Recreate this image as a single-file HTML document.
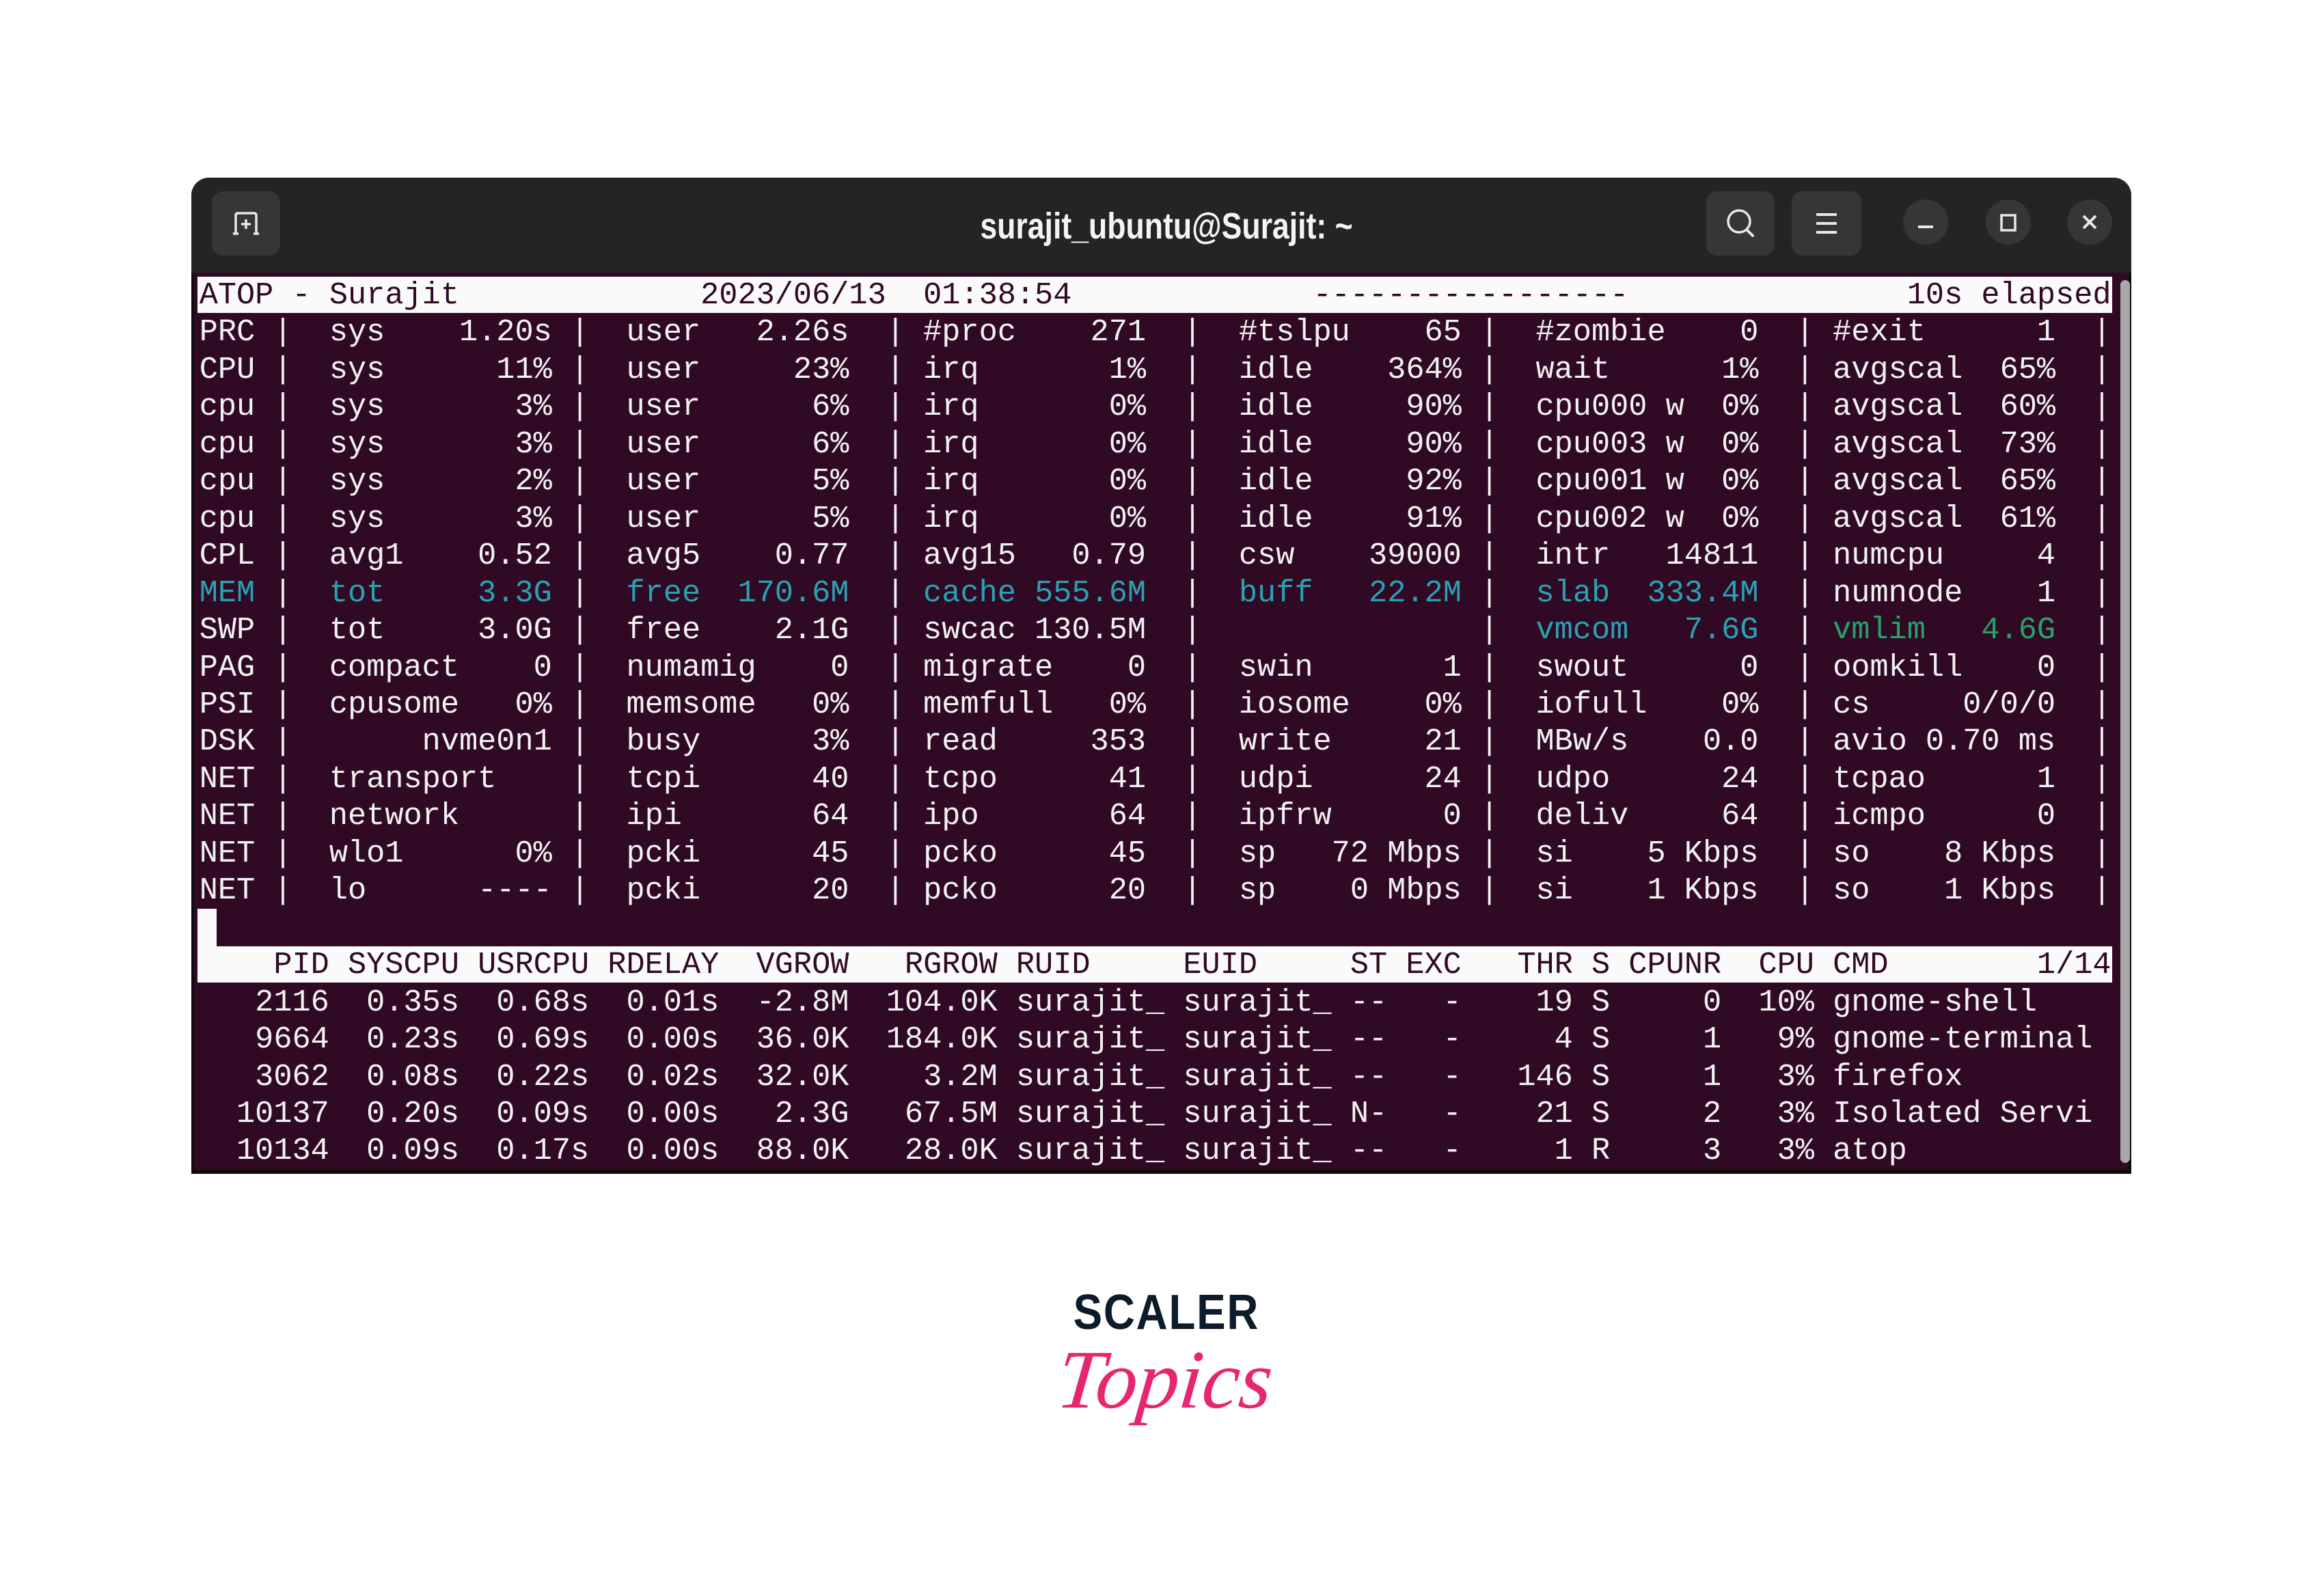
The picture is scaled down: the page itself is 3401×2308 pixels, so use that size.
<!DOCTYPE html>
<html><head><meta charset="utf-8">
<style>
html,body{margin:0;padding:0;background:#fff;}
body{width:3401px;height:2308px;position:relative;overflow:hidden;}
#win{position:absolute;left:280px;top:260px;width:2839px;height:1458px;background:#0c0c0c;border-radius:26px 26px 0 0;overflow:hidden;}
#tb{position:absolute;left:0;top:0;width:2839px;height:139px;background:#242424;}
#term{position:absolute;left:4px;top:139px;width:2831px;height:1313px;background:#300a24;}
.btn{position:absolute;background:#363636;border-radius:16px;}
.circ{position:absolute;background:#363636;border-radius:50%;width:66px;height:66px;top:292px;}
#title{position:absolute;top:300px;left:1707px;transform:translateX(-50%) scaleX(.826);font:bold 54px "Liberation Sans",sans-serif;color:#f4f4f4;white-space:nowrap;}
pre{position:absolute;left:291.7px;top:405px;margin:0;font-family:"Liberation Mono",monospace;font-size:45.28px;line-height:54.45px;color:#f2f2f2;white-space:pre;}
.c{color:#2aa1b3}.g{color:#26a269}
.bar{position:absolute;background:#fafafa;}
.hd{color:#300a24}
#sb{position:absolute;left:3103px;top:410px;width:14px;height:1292px;background:#a8a8a8;border-radius:8px;}
</style></head><body>
<div id="win">
 <div id="tb"></div>
 <div id="term"></div>
</div>
<div class="btn" style="left:310px;top:280px;width:100px;height:94px;"></div>
<svg style="position:absolute;left:310px;top:280px" width="100" height="94" viewBox="0 0 100 94"><path d="M35 62 L35 35 Q35 32 38 32 L62 32 Q65 32 65 35 L65 62 M31 62 L39 62 M61 62 L69 62 M50 41 L50 55 M43 48 L57 48" fill="none" stroke="#e8e8e8" stroke-width="3.5"/></svg>
<div class="btn" style="left:2497px;top:280px;width:100px;height:94px;"></div>
<svg style="position:absolute;left:2497px;top:280px" width="100" height="94" viewBox="0 0 100 94"><circle cx="48" cy="44" r="16" fill="none" stroke="#e8e8e8" stroke-width="3.5"/><path d="M59 56 L68 65" stroke="#e8e8e8" stroke-width="4" stroke-linecap="round"/></svg>
<div class="btn" style="left:2622px;top:280px;width:102px;height:94px;"></div>
<svg style="position:absolute;left:2622px;top:280px" width="102" height="94" viewBox="0 0 102 94"><path d="M36 34 H66 M36 47 H66 M36 60 H66" stroke="#e8e8e8" stroke-width="4"/></svg>
<div class="circ" style="left:2785px;"></div>
<svg style="position:absolute;left:2785px;top:292px" width="66" height="66"><path d="M22 40 H44" stroke="#e8e8e8" stroke-width="4"/></svg>
<div class="circ" style="left:2906px;"></div>
<svg style="position:absolute;left:2906px;top:292px" width="66" height="66"><rect x="23" y="23" width="20" height="22" fill="none" stroke="#e8e8e8" stroke-width="3.5"/></svg>
<div class="circ" style="left:3025px;"></div>
<svg style="position:absolute;left:3025px;top:292px" width="66" height="66"><path d="M24 24 L42 42 M42 24 L24 42" stroke="#e8e8e8" stroke-width="4"/></svg>
<div id="title">surajit_ubuntu@Surajit: ~</div>

<div class="bar" style="left:289px;top:405px;width:2802px;height:53px;"></div>
<div class="bar" style="left:289px;top:1330px;width:28px;height:60px;"></div>
<div class="bar" style="left:289px;top:1385px;width:2802px;height:53px;"></div>
<div id="sb"></div>

<pre><span class="hd">ATOP - Surajit             2023/06/13  01:38:54             -----------------               10s elapsed</span>
PRC |  sys    1.20s |  user   2.26s  | #proc    271  |  #tslpu    65 |  #zombie    0  | #exit      1  |
CPU |  sys      11% |  user     23%  | irq       1%  |  idle    364% |  wait      1%  | avgscal  65%  |
cpu |  sys       3% |  user      6%  | irq       0%  |  idle     90% |  cpu000 w  0%  | avgscal  60%  |
cpu |  sys       3% |  user      6%  | irq       0%  |  idle     90% |  cpu003 w  0%  | avgscal  73%  |
cpu |  sys       2% |  user      5%  | irq       0%  |  idle     92% |  cpu001 w  0%  | avgscal  65%  |
cpu |  sys       3% |  user      5%  | irq       0%  |  idle     91% |  cpu002 w  0%  | avgscal  61%  |
CPL |  avg1    0.52 |  avg5    0.77  | avg15   0.79  |  csw    39000 |  intr   14811  | numcpu     4  |
<span class="c">MEM</span> |  <span class="c">tot     3.3G</span> |  <span class="c">free  170.6M</span>  | <span class="c">cache 555.6M</span>  |  <span class="c">buff   22.2M</span> |  <span class="c">slab  333.4M</span>  | numnode    1  |
SWP |  tot     3.0G |  free    2.1G  | swcac 130.5M  |               |  <span class="c">vmcom   7.6G</span>  | <span class="g">vmlim   4.6G</span>  |
PAG |  compact    0 |  numamig    0  | migrate    0  |  swin       1 |  swout      0  | oomkill    0  |
PSI |  cpusome   0% |  memsome   0%  | memfull   0%  |  iosome    0% |  iofull    0%  | cs     0/0/0  |
DSK |       nvme0n1 |  busy      3%  | read     353  |  write     21 |  MBw/s    0.0  | avio 0.70 ms  |
NET |  transport    |  tcpi      40  | tcpo      41  |  udpi      24 |  udpo      24  | tcpao      1  |
NET |  network      |  ipi       64  | ipo       64  |  ipfrw      0 |  deliv     64  | icmpo      0  |
NET |  wlo1      0% |  pcki      45  | pcko      45  |  sp   72 Mbps |  si    5 Kbps  | so    8 Kbps  |
NET |  lo      ---- |  pcki      20  | pcko      20  |  sp    0 Mbps |  si    1 Kbps  | so    1 Kbps  |

<span class="hd">    PID SYSCPU USRCPU RDELAY  VGROW   RGROW RUID     EUID     ST EXC   THR S CPUNR  CPU CMD        1/14</span>
   2116  0.35s  0.68s  0.01s  -2.8M  104.0K surajit_ surajit_ --   -    19 S     0  10% gnome-shell
   9664  0.23s  0.69s  0.00s  36.0K  184.0K surajit_ surajit_ --   -     4 S     1   9% gnome-terminal
   3062  0.08s  0.22s  0.02s  32.0K    3.2M surajit_ surajit_ --   -   146 S     1   3% firefox
  10137  0.20s  0.09s  0.00s   2.3G   67.5M surajit_ surajit_ N-   -    21 S     2   3% Isolated Servi
  10134  0.09s  0.17s  0.00s  88.0K   28.0K surajit_ surajit_ --   -     1 R     3   3% atop</pre>

<div style="position:absolute;left:1553px;top:1880px;width:306px;text-align:center;font:bold 72px 'Liberation Sans',sans-serif;letter-spacing:2px;color:#0d1b2a;transform:scaleX(.885);transform-origin:center;">SCALER</div>
<div style="position:absolute;left:1520px;top:1950px;width:370px;text-align:center;font:italic 122px 'Liberation Serif',serif;color:#e8266f;line-height:140px;transform:skewX(-6deg);">Topics</div>
</body></html>
